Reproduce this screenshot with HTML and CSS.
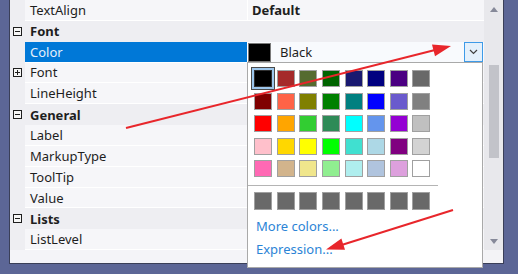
FILE: index.html
```html
<!DOCTYPE html>
<html>
<head>
<meta charset="utf-8">
<link rel="stylesheet" href="styles.css">
</head>
<body>
<div class="stage">
  <div class="panel">
    <div class="grid">
      <div class="row prop"><span class="gutter"></span><span class="name">TextAlign</span><span class="split"></span><span class="value bold">Default</span></div>
      <div class="row cat"><span class="gutter"><i class="exp"></i></span><span class="catname">Font</span></div>
      <div class="row prop sel"><span class="gutter"></span><span class="name">Color</span><span class="split"></span><span class="value editor"><span class="cur-swatch"></span><span class="cur-text">Black</span><span class="ddbtn"><svg width="9" height="6" viewBox="0 0 9 6"><path d="M1 1 L4.5 4.5 L8 1" fill="none" stroke="#404040" stroke-width="1.2"/></svg></span></span></div>
      <div class="row prop"><span class="gutter"><i class="exp plus"></i></span><span class="name">Font</span><span class="split"></span><span class="value"></span></div>
      <div class="row prop"><span class="gutter"></span><span class="name">LineHeight</span><span class="split"></span><span class="value"></span></div>
      <div class="row cat"><span class="gutter"><i class="exp"></i></span><span class="catname">General</span></div>
      <div class="row prop"><span class="gutter"></span><span class="name">Label</span><span class="split"></span><span class="value"></span></div>
      <div class="row prop"><span class="gutter"></span><span class="name">MarkupType</span><span class="split"></span><span class="value"></span></div>
      <div class="row prop"><span class="gutter"></span><span class="name">ToolTip</span><span class="split"></span><span class="value"></span></div>
      <div class="row prop"><span class="gutter"></span><span class="name">Value</span><span class="split"></span><span class="value"></span></div>
      <div class="row cat"><span class="gutter"><i class="exp"></i></span><span class="catname">Lists</span></div>
      <div class="row prop"><span class="gutter"></span><span class="name">ListLevel</span><span class="split"></span><span class="value"></span></div>
    </div>
    <div class="scroll">
      <span class="arr up"></span>
      <span class="thumb"></span>
      <span class="arr down"></span>
      <span class="corner"></span>
    </div>
  </div>

  <div class="popup">
    <div class="swatches">
      <span class="sw selected" style="background:#000000"></span>
      <span class="sw" style="background:#a52a2a"></span>
      <span class="sw" style="background:#556b2f"></span>
      <span class="sw" style="background:#006400"></span>
      <span class="sw" style="background:#191970"></span>
      <span class="sw" style="background:#000080"></span>
      <span class="sw" style="background:#4b0082"></span>
      <span class="sw" style="background:#696969"></span>
      <span class="sw" style="background:#800000"></span>
      <span class="sw" style="background:#ff6347"></span>
      <span class="sw" style="background:#808000"></span>
      <span class="sw" style="background:#008000"></span>
      <span class="sw" style="background:#008080"></span>
      <span class="sw" style="background:#0000ff"></span>
      <span class="sw" style="background:#6a5acd"></span>
      <span class="sw" style="background:#808080"></span>
      <span class="sw" style="background:#ff0000"></span>
      <span class="sw" style="background:#ffa500"></span>
      <span class="sw" style="background:#32cd32"></span>
      <span class="sw" style="background:#2e8b57"></span>
      <span class="sw" style="background:#00ffff"></span>
      <span class="sw" style="background:#6495ed"></span>
      <span class="sw" style="background:#9400d3"></span>
      <span class="sw" style="background:#c0c0c0"></span>
      <span class="sw" style="background:#ffc0cb"></span>
      <span class="sw" style="background:#ffd700"></span>
      <span class="sw" style="background:#ffff00"></span>
      <span class="sw" style="background:#00ff00"></span>
      <span class="sw" style="background:#40e0d0"></span>
      <span class="sw" style="background:#add8e6"></span>
      <span class="sw" style="background:#800080"></span>
      <span class="sw" style="background:#d3d3d3"></span>
      <span class="sw" style="background:#ff69b4"></span>
      <span class="sw" style="background:#d2b48c"></span>
      <span class="sw" style="background:#f0e68c"></span>
      <span class="sw" style="background:#90ee90"></span>
      <span class="sw" style="background:#afeeee"></span>
      <span class="sw" style="background:#b0c4de"></span>
      <span class="sw" style="background:#dda0dd"></span>
      <span class="sw" style="background:#ffffff"></span>
    </div>
    <div class="sep"></div>
    <div class="swatches recent">
      <span class="sw gray"></span><span class="sw gray"></span><span class="sw gray"></span><span class="sw gray"></span>
      <span class="sw gray"></span><span class="sw gray"></span><span class="sw gray"></span><span class="sw gray"></span>
    </div>
    <div class="links">
      <span class="link">More colors...</span>
      <span class="link">Expression...</span>
    </div>
  </div>

  <svg class="arrows" width="518" height="274" viewBox="0 0 518 274">
    <line x1="126" y1="128" x2="437" y2="49.5" stroke="#e8262b" stroke-width="2"/>
    <polygon points="451,46 435,56.2 432,44.6" fill="#e8262b"/>
    <line x1="453" y1="210" x2="340" y2="245.5" stroke="#e8262b" stroke-width="2"/>
    <polygon points="326,249.5 345,249.8 341.4,238.4" fill="#e8262b"/>
  </svg>
</div>
</body>
</html>
```

FILE: styles.css
```css
* { box-sizing: border-box; }
html, body { margin: 0; padding: 0; }
body {
  font-family: "Noto Sans", "Open Sans", sans-serif;
  font-size: 13px;
  color: #1e1e1e;
  background: #5c6696;
}
.stage {
  position: relative;
  width: 518px;
  height: 274px;
  overflow: hidden;
  background: #5c6696;
}
.panel {
  margin-left: 9px;
  width: 495px;
  height: 264px;
  border-left: 1px solid #3a3f58;
  border-right: 1px solid #3a3f58;
  border-bottom: 1px solid #3a3f58;
  display: flex;
  background: #f4f4f8;
}
.grid {
  width: 474px;
  display: flex;
  flex-direction: column;
  background: #f4f4f8;
}
.row {
  display: flex;
  height: 20.85px;
  align-items: stretch;
}
.gutter {
  width: 15px;
  flex: none;
  background: #eeeef2;
  display: flex;
  align-items: center;
  padding-left: 3px;
}
.exp {
  display: block;
  position: relative;
  width: 9px;
  height: 9px;
  border: 1px solid #1e1e1e;
  background: #f6f6f6;
}
.exp::before {
  content: "";
  position: absolute;
  left: 1px;
  top: 3px;
  width: 5px;
  height: 1px;
  background: #1e1e1e;
}
.exp.plus::after {
  content: "";
  position: absolute;
  left: 3px;
  top: 1px;
  width: 1px;
  height: 5px;
  background: #1e1e1e;
}
.name {
  width: 222px;
  flex: none;
  padding-left: 5px;
  display: flex;
  align-items: center;
  background: #f6f6f9;
  border-bottom: 1px solid #ffffff;
  white-space: nowrap;
}
.split {
  width: 1px;
  flex: none;
  background: #ffffff;
}
.value {
  flex: 1;
  display: flex;
  align-items: center;
  padding-left: 4px;
  background: #f6f6f9;
  border-bottom: 1px solid #ffffff;
}
.bold { font-weight: bold; }
.cat {
  background: #eeeef2;
}
.catname {
  padding-left: 5px;
  font-weight: bold;
  display: flex;
  align-items: center;
}
.sel .name {
  background: #0078d7;
  color: #e6f0fa;
}
.editor {
  padding-left: 0;
  background: #f8fafd;
  border-bottom: none;
}
.cur-swatch {
  width: 23px;
  height: 19px;
  background: #000;
  border: 1px solid #7a7a7a;
  flex: none;
}
.cur-text {
  margin-left: 9px;
}
.ddbtn {
  margin-left: auto;
  margin-right: 1px;
  width: 19px;
  height: 20px;
  border: 1px solid #3d9ae8;
  background: #e4f0fb;
  display: flex;
  align-items: center;
  justify-content: center;
}
.scroll {
  width: 19px;
  flex: none;
  background: #e8e8ec;
  display: flex;
  flex-direction: column;
  align-items: center;
}
.arr {
  width: 0;
  height: 0;
  border-left: 4.5px solid transparent;
  border-right: 4.5px solid transparent;
}
.arr.up {
  margin-top: 7px;
  border-bottom: 5px solid #868999;
}
.thumb {
  margin-top: 53px;
  width: 10px;
  height: 93px;
  background: #c2c3c9;
}
.arr.down {
  margin-top: 81px;
  border-top: 5px solid #868999;
}
.corner {
  margin-top: 6px;
  width: 100%;
  flex: 1;
  background: #f3f3f6;
}
.popup {
  position: absolute;
  left: 247px;
  top: 62px;
  width: 236px;
  height: 206px;
  background: #ffffff;
  border: 1px solid #a9a9a9;
  padding: 7px 0 0 6px;
}
.swatches {
  display: grid;
  grid-template-columns: repeat(8, 18px);
  grid-auto-rows: 17px;
  column-gap: 4.65px;
  row-gap: 5.5px;
}
.sw {
  display: block;
  border: 1px solid #a0a0a0;
}
.sw.selected {
  border-color: #303030;
  box-shadow: 0 0 0 2px #9cc6ec, 0 0 0 3px #4a4a4a;
}
.sw.gray { background: #696969; }
.sep {
  margin: 7.5px 0 0 -6px;
  width: 190px;
  height: 1px;
  background: #b4b4b4;
}
.recent {
  margin-top: 6px;
  grid-auto-rows: 18px;
}
.links {
  margin-top: 5px;
  padding-left: 2px;
  display: flex;
  flex-direction: column;
}
.link {
  color: #2b84d6;
  line-height: 23px;
}
.arrows {
  position: absolute;
  left: 0;
  top: 0;
  pointer-events: none;
}
```
